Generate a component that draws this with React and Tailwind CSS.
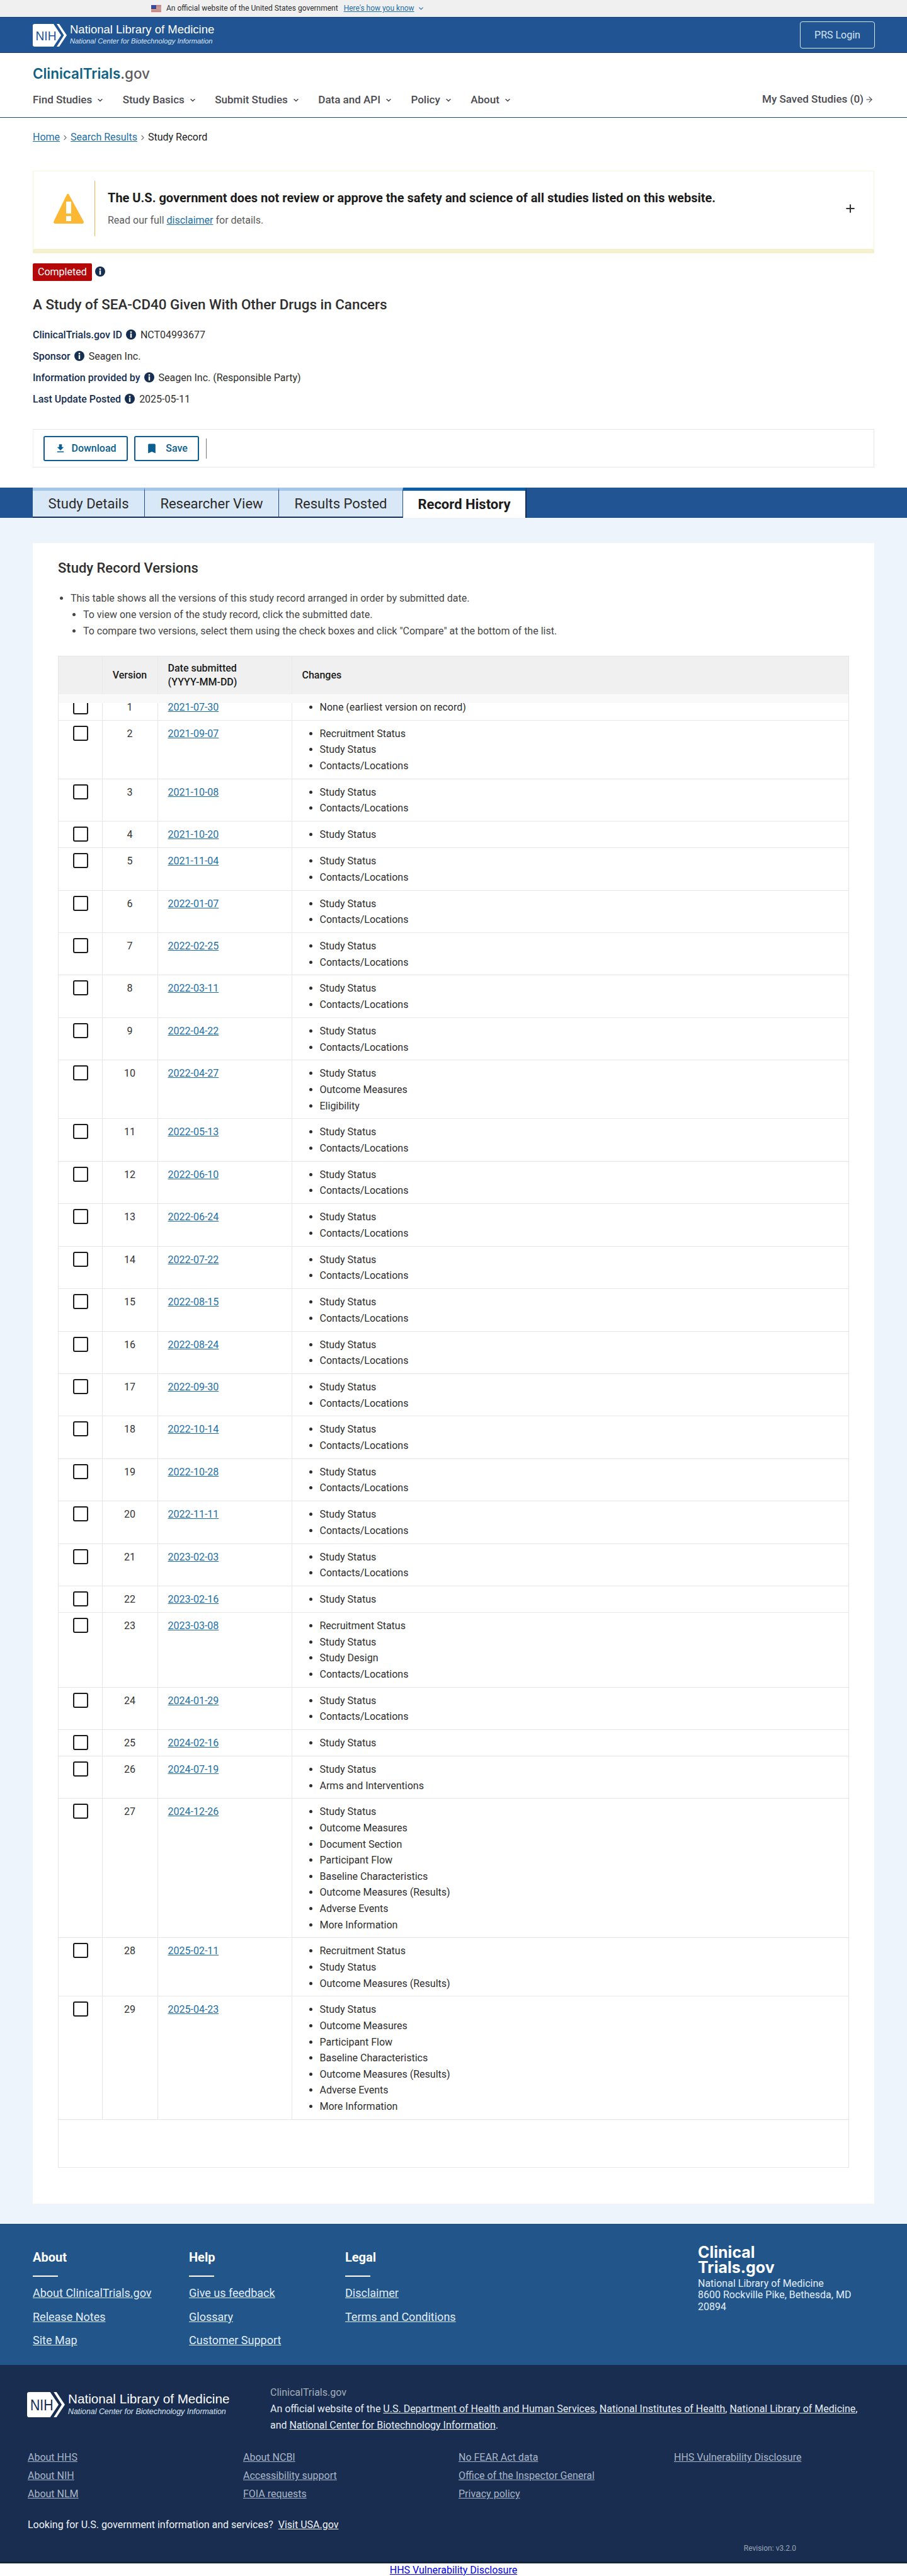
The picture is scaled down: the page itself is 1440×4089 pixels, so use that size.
import { ArrowRight, ChevronDown, ChevronRight, Plus } from 'lucide-react';

const SS = 'Study Status';
const CL = 'Contacts/Locations';
const OM = 'Outcome Measures';
const RS = 'Recruitment Status';
const OMR = 'Outcome Measures (Results)';

const versions = [
  ['2021-07-30', ['None (earliest version on record)']],
  ['2021-09-07', [RS, SS, CL]],
  ['2021-10-08', [SS, CL]],
  ['2021-10-20', [SS]],
  ['2021-11-04', [SS, CL]],
  ['2022-01-07', [SS, CL]],
  ['2022-02-25', [SS, CL]],
  ['2022-03-11', [SS, CL]],
  ['2022-04-22', [SS, CL]],
  ['2022-04-27', [SS, OM, 'Eligibility']],
  ['2022-05-13', [SS, CL]],
  ['2022-06-10', [SS, CL]],
  ['2022-06-24', [SS, CL]],
  ['2022-07-22', [SS, CL]],
  ['2022-08-15', [SS, CL]],
  ['2022-08-24', [SS, CL]],
  ['2022-09-30', [SS, CL]],
  ['2022-10-14', [SS, CL]],
  ['2022-10-28', [SS, CL]],
  ['2022-11-11', [SS, CL]],
  ['2023-02-03', [SS, CL]],
  ['2023-02-16', [SS]],
  ['2023-03-08', [RS, SS, 'Study Design', CL]],
  ['2024-01-29', [SS, CL]],
  ['2024-02-16', [SS]],
  ['2024-07-19', [SS, 'Arms and Interventions']],
  ['2024-12-26', [SS, OM, 'Document Section', 'Participant Flow', 'Baseline Characteristics', OMR, 'Adverse Events', 'More Information']],
  ['2025-02-11', [RS, SS, OMR]],
  ['2025-04-23', [SS, OM, 'Participant Flow', 'Baseline Characteristics', OMR, 'Adverse Events', 'More Information']],
];

const navItems = ['Find Studies', 'Study Basics', 'Submit Studies', 'Data and API', 'Policy', 'About'];

const footerColumns = [
  { title: 'About', width: 'w-[248px]', links: ['About ClinicalTrials.gov', 'Release Notes', 'Site Map'] },
  { title: 'Help', width: 'w-[248px]', links: ['Give us feedback', 'Glossary', 'Customer Support'] },
  { title: 'Legal', width: 'w-[248px]', links: ['Disclaimer', 'Terms and Conditions'] },
];

const agencyLinks = [
  ['About HHS', 'About NIH', 'About NLM'],
  ['About NCBI', 'Accessibility support', 'FOIA requests'],
  ['No FEAR Act data', 'Office of the Inspector General', 'Privacy policy'],
  ['HHS Vulnerability Disclosure'],
];

function NihMark({ className, textColor }) {
  return (
    <svg viewBox="0 0 54 36" className={className}>
      <path d="M3 0H33L45 18L33 36H3a3 3 0 0 1-3-3V3a3 3 0 0 1 3-3z" fill="#fff" />
      <path d="M38 0H42L54 18L42 36H38L49.500 18z" fill="#fff" />
      <text x="4.500" y="26" fontSize="21" fontFamily="Liberation Sans, sans-serif" fill={textColor} textLength="33" lengthAdjust="spacingAndGlyphs">
        NIH
      </text>
    </svg>
  );
}

function InfoDot({ className = '' }) {
  return (
    <svg viewBox="0 0 16 16" className={`w-4 h-4 shrink-0 ${className}`}>
      <circle cx="8" cy="8" r="8" fill="#162e51" />
      <rect x="6.800" y="3" width="2.400" height="2.400" fill="#fff" />
      <rect x="6.800" y="6.500" width="2.400" height="6.500" fill="#fff" />
    </svg>
  );
}

function FlagIcon() {
  return (
    <svg viewBox="0 0 16 11" className="w-4 h-[11px] mr-2">
      <rect width="16" height="11" fill="#fff" />
      {[0, 2, 4, 6, 8, 10].map((y) => (
        <rect key={y} y={y} width="16" height="1" fill="#c8312b" />
      ))}
      <rect width="8" height="6" fill="#3c4a9a" />
    </svg>
  );
}

function MetaRow({ label, value }) {
  return (
    <div className="flex items-center h-[34px]">
      <span className="font-medium text-[#162e51]">{label}</span>
      <InfoDot className="ml-[6px] mr-[7px] -mt-[2px]" />
      <span className="text-[#2e2e2e]">{value}</span>
    </div>
  );
}

function Tab({ label, width }) {
  return (
    <div className={`${width} h-[48px] flex items-center justify-center bg-[#d9e8f6] border-t-[5px] border-t-[#a4c6e8] border-b-2 border-b-[#162e51] border-r border-r-[#1f4f8a] text-[22px] text-[#2a2a2a] pb-[1px]`}>
      {label}
    </div>
  );
}

function VersionRow({ number, date, changes }) {
  return (
    <tr className="border-b border-[#e6e6e6]">
      <td className="border-r border-[#e6e6e6] align-top pt-[8px]">
        <div className="w-6 h-6 ml-[23px] rounded-[3px] border-2 border-[#1b1b1b] bg-white" />
      </td>
      <td className="border-r border-[#e6e6e6] align-top pt-[8px] text-center leading-[25.6px] text-[#333]">{number}</td>
      <td className="border-r border-[#e6e6e6] align-top pt-[8px] pl-[16px] leading-[25.6px]">
        <a className="underline text-[#1d6fa5]">{date}</a>
      </td>
      <td className="align-top pt-[8px] pb-[7.250px]">
        <ul className="list-disc pl-[44px] leading-[25.6px] text-[#2e2e2e]">
          {changes.map((item) => (
            <li key={item}>{item}</li>
          ))}
        </ul>
      </td>
    </tr>
  );
}

export default function App() {
  return (
    <div className="font-['Roboto',sans-serif] text-[16px] text-[#1b1b1b] bg-white">
      {/* gov banner */}
      <div className="h-[27px] bg-[#f0f0f0] border-b border-[#cfe3f5] flex items-center pl-[240px] text-[12px] text-[#2e2e2e]">
        <FlagIcon />
        <span>An official website of the United States government</span>
        <a className="underline text-[#1d6fa5] ml-[9px]">Here's how you know</a>
        <ChevronDown size={11} strokeWidth={2.500} className="ml-[5px] text-[#1d6fa5]" />
      </div>

      {/* NLM bar */}
      <div className="h-[57px] bg-[#205493] border-y border-[#17375f] flex items-center justify-between pl-[52px] pr-[51px]">
        <div className="flex items-center">
          <NihMark className="w-[54px] h-[36px]" textColor="#205493" />
          <div className="ml-[5px] text-white font-['Liberation_Sans',sans-serif]">
            <div className="text-[18.500px] leading-[22px] -mt-[3px]">National Library of Medicine</div>
            <div className="text-[11.200px] leading-[13px] italic mt-[1px] text-[#dbe7f5]">National Center for Biotechnology Information</div>
          </div>
        </div>
        <div className="w-[119px] h-[43px] flex items-center justify-center rounded border border-[#d5e5f7] text-[#d5e5f7]">PRS Login</div>
      </div>

      {/* site nav */}
      <div className="h-[103px] border-b border-[#1f4a75] px-[52px] pt-[19px]">
        <div className="font-['Inter',sans-serif] font-semibold text-[22.400px] leading-[28px] text-[#0f6183]">
          ClinicalTrials<span className="text-[#5c5c60] font-medium">.gov</span>
        </div>
        <div className="flex items-center mt-[15px] font-medium text-[17px] text-[#4b4b52]">
          <div className="flex gap-[29.500px]">
            {navItems.map((item) => (
              <div key={item} className="flex items-center">
                {item}
                <ChevronDown size={12} strokeWidth={3} className="ml-[7px]" />
              </div>
            ))}
          </div>
          <div className="ml-auto flex items-center -mt-[2px]">
            My Saved Studies (0)
            <ArrowRight size={14} className="ml-[2px] mr-[1px]" />
          </div>
        </div>
      </div>

      {/* breadcrumb */}
      <div className="flex items-center h-[24px] mt-[19px] px-[52px]">
        <a className="underline text-[#1d6fa5]">Home</a>
        <ChevronRight size={13} className="mx-[2px] text-[#71767a]" />
        <a className="underline text-[#1d6fa5]">Search Results</a>
        <ChevronRight size={13} className="mx-[2px] text-[#71767a]" />
        <span>Study Record</span>
      </div>

      {/* disclaimer */}
      <div className="mx-[52px] mt-[41px] h-[131px] border border-[#f7f4d8] border-b-[7px] border-b-[#f5f1cf] flex items-center pb-[6px]">
        <div className="w-[97px] flex justify-end pr-[15px]">
          <svg viewBox="0 0 52 52" className="w-[52px] h-[52px]">
            <path d="M26 3L49.500 46a2.500 2.500 0 0 1-2.200 4H4.700a2.500 2.500 0 0 1-2.200-4L23 4a2 2 0 0 1 3-1z" fill="#fdb833" />
            <rect x="22" y="15" width="8" height="19" fill="#fff" />
            <rect x="22" y="38" width="8" height="8" fill="#fff" />
          </svg>
        </div>
        <div className="w-px h-[88px] bg-[#f1b748]" />
        <div className="ml-[20px] flex-1">
          <div className="text-[20px] leading-[28px] font-bold text-[#1b1b1b]">
            The U.S. government does not review or approve the safety and science of all studies listed on this website.
          </div>
          <div className="mt-[10px] leading-[24px] text-[#5c5c5c]">
            Read our full <a className="underline text-[#1d6fa5]">disclaimer</a> for details.
          </div>
        </div>
        <Plus size={20} strokeWidth={2.500} className="mr-[27px] text-[#333]" />
      </div>

      {/* study header */}
      <div className="px-[52px]">
        <div className="flex items-start mt-[16px]">
          <span className="h-[28px] px-[8px] flex items-center rounded-[2px] bg-[#b50909] text-white">Completed</span>
          <InfoDot className="ml-[5px] mt-[5px]" />
        </div>
        <h1 className="mt-[21px] text-[22.400px] leading-[32px] font-medium text-[#2e2e2e]">A Study of SEA-CD40 Given With Other Drugs in Cancers</h1>
        <div className="mt-[16px]">
          <MetaRow label="ClinicalTrials.gov ID" value="NCT04993677" />
          <MetaRow label="Sponsor" value="Seagen Inc." />
          <MetaRow label="Information provided by" value="Seagen Inc. (Responsible Party)" />
          <MetaRow label="Last Update Posted" value="2025-05-11" />
        </div>
        <div className="mt-[30px] h-[61px] border border-[#e6e6e6] border-l-[#f0f0f0] flex items-center pl-[16px]">
          <button className="w-[134px] h-[40px] rounded-[3px] border-2 border-[#0b5e8f] text-[#0b5e8f] font-medium flex items-center justify-center gap-[8px]">
            <svg viewBox="0 0 24 24" className="w-[18px] h-[18px]" fill="currentColor">
              <path d="M19 9h-4V3H9v6H5l7 7 7-7zM5 18v2h14v-2H5z" />
            </svg>
            Download
          </button>
          <button className="w-[103px] h-[40px] ml-[10px] rounded-[3px] border-2 border-[#0b5e8f] text-[#0b5e8f] font-medium flex items-center justify-center gap-[12px]">
            <svg viewBox="0 0 24 24" className="w-[20px] h-[20px]" fill="currentColor">
              <path d="M17 3H7c-1.100 0-2 .9-2 2v16l7-3 7 3V5c0-1.100-.9-2-2-2z" />
            </svg>
            Save
          </button>
          <div className="w-px h-[32px] ml-[11px] bg-[#71767a]" />
        </div>
      </div>

      {/* tabs */}
      <div className="mt-[32px] h-[48px] bg-[#205493] flex pl-[52px]">
        <Tab label="Study Details" width="w-[178px]" />
        <Tab label="Researcher View" width="w-[213px]" />
        <Tab label="Results Posted" width="w-[197px]" />
        <div className="w-[196px] h-[48px] flex items-center justify-center bg-white border-t-[5px] border-t-[#0b5ea8] border-r-2 border-r-[#162e51] text-[22px] font-bold text-[#1b1b1b]">
          Record History
        </div>
      </div>

      {/* record history */}
      <div className="bg-[#edf4fb] px-[52px] pt-[40px] pb-[32px]">
        <div className="bg-white px-[40px] pt-[24px] pb-[57px]">
          <h2 className="text-[22px] leading-[32px] font-medium text-[#2e2e2e]">Study Record Versions</h2>
          <ul className="list-disc pl-[20px] mt-[19px] leading-[26px] text-[#454545]">
            <li>This table shows all the versions of this study record arranged in order by submitted date.</li>
            <ul className="list-disc pl-[20px]">
              <li>To view one version of the study record, click the submitted date.</li>
              <li>To compare two versions, select them using the check boxes and click "Compare" at the bottom of the list.</li>
            </ul>
          </ul>

          <div className="relative mt-[26px] border border-[#e6e6e6]">
            <table className="w-full table-fixed border-collapse">
              <colgroup>
                <col className="w-[69px]" />
                <col className="w-[88px]" />
                <col className="w-[213px]" />
                <col />
              </colgroup>
              <thead>
                <tr className="h-[60px] bg-[#f0f0f0] font-medium text-[#1b1b1b] leading-[22px]">
                  <th className="font-medium border-r border-[#e9e9e9]"></th>
                  <th className="font-medium border-r border-[#e9e9e9] text-center">Version</th>
                  <th className="font-medium border-r border-[#e9e9e9] text-left pl-[16px]">
                    Date submitted
                    <br />
                    (YYYY-MM-DD)
                  </th>
                  <th className="font-medium text-left pl-[16px]">Changes</th>
                </tr>
              </thead>
              <tbody>
                {versions.map(([date, changes], i) => (
                  <VersionRow key={date} number={i + 1} date={date} changes={changes} />
                ))}
              </tbody>
            </table>
            <div className="absolute left-0 right-0 top-[60px] h-[14px] bg-[#f9f9f9]" />
            <div className="h-[75px]" />
          </div>
        </div>
      </div>

      {/* footer top */}
      <div className="h-[224px] bg-[#22558a] border-t border-[#1f4a75] flex pl-[52px] pr-[51px] pt-[38px]">
        {footerColumns.map((col) => (
          <div key={col.title} className={col.width}>
            <div className="text-[20px] leading-[28px] font-bold text-white">{col.title}</div>
            <div className="w-[40px] h-[2px] bg-white mt-[15px] mb-[7px]" />
            {col.links.map((link) => (
              <div key={link} className="h-[37.500px] flex items-center">
                <a className="underline text-[18px] text-[#e1eefb]">{link}</a>
              </div>
            ))}
          </div>
        ))}
        <div className="ml-auto w-[281px] -mt-[6px]">
          <div className="font-['Inter',sans-serif] font-bold text-[25px] leading-[24px] text-white">
            Clinical
            <br />
            Trials.gov
          </div>
          <div className="mt-[5px] leading-[18.500px] text-[#e1eefb]">
            National Library of Medicine
            <br />
            8600 Rockville Pike, Bethesda, MD 20894
          </div>
        </div>
      </div>

      {/* footer bottom */}
      <div className="h-[315px] bg-[#182d50] border-b-[3px] border-b-[#12233f] pl-[44px] pt-[31px]">
        <div className="flex items-start">
          <div className="w-[386px] flex items-center mt-[12px] -ml-[1px]">
            <NihMark className="w-[60px] h-[40px]" textColor="#182d50" />
            <div className="ml-[5px] text-white font-['Liberation_Sans',sans-serif]">
              <div className="text-[20.700px] leading-[24px] -mt-[3px]">National Library of Medicine</div>
              <div className="text-[12.400px] leading-[14px] italic mt-[1px] text-[#dbe7f5]">National Center for Biotechnology Information</div>
            </div>
          </div>
          <div className="leading-[26px] text-[#e6edf6]">
            <div className="text-[#a4adba]">ClinicalTrials.gov</div>
            <div>
              An official website of the <a className="underline">U.S. Department of Health and Human Services</a>,{' '}
              <a className="underline">National Institutes of Health</a>, <a className="underline">National Library of Medicine</a>,
            </div>
            <div>
              and <a className="underline">National Center for Biotechnology Information</a>.
            </div>
          </div>
        </div>
        <div className="grid grid-cols-4 w-[1368px] mt-[24px]">
          {agencyLinks.map((col) => (
            <div key={col[0]}>
              {col.map((link) => (
                <div key={link} className="h-[29px] flex items-center">
                  <a className="underline text-[#a9b6c8]">{link}</a>
                </div>
              ))}
            </div>
          ))}
        </div>
        <div className="mt-[21px] leading-[26px] text-[#f0f3f7]">
          Looking for U.S. government information and services? <a className="underline ml-[4px]">Visit USA.gov</a>
        </div>
        <div className="flex justify-end pr-[176px] mt-[14px] text-[12px] leading-[20px] text-[#9aa5b5]">Revision: v3.2.0</div>
      </div>

      <div className="h-[21px] text-center leading-[21px]">
        <a className="underline text-[#0000ee]">HHS Vulnerability Disclosure</a>
      </div>
    </div>
  );
}
